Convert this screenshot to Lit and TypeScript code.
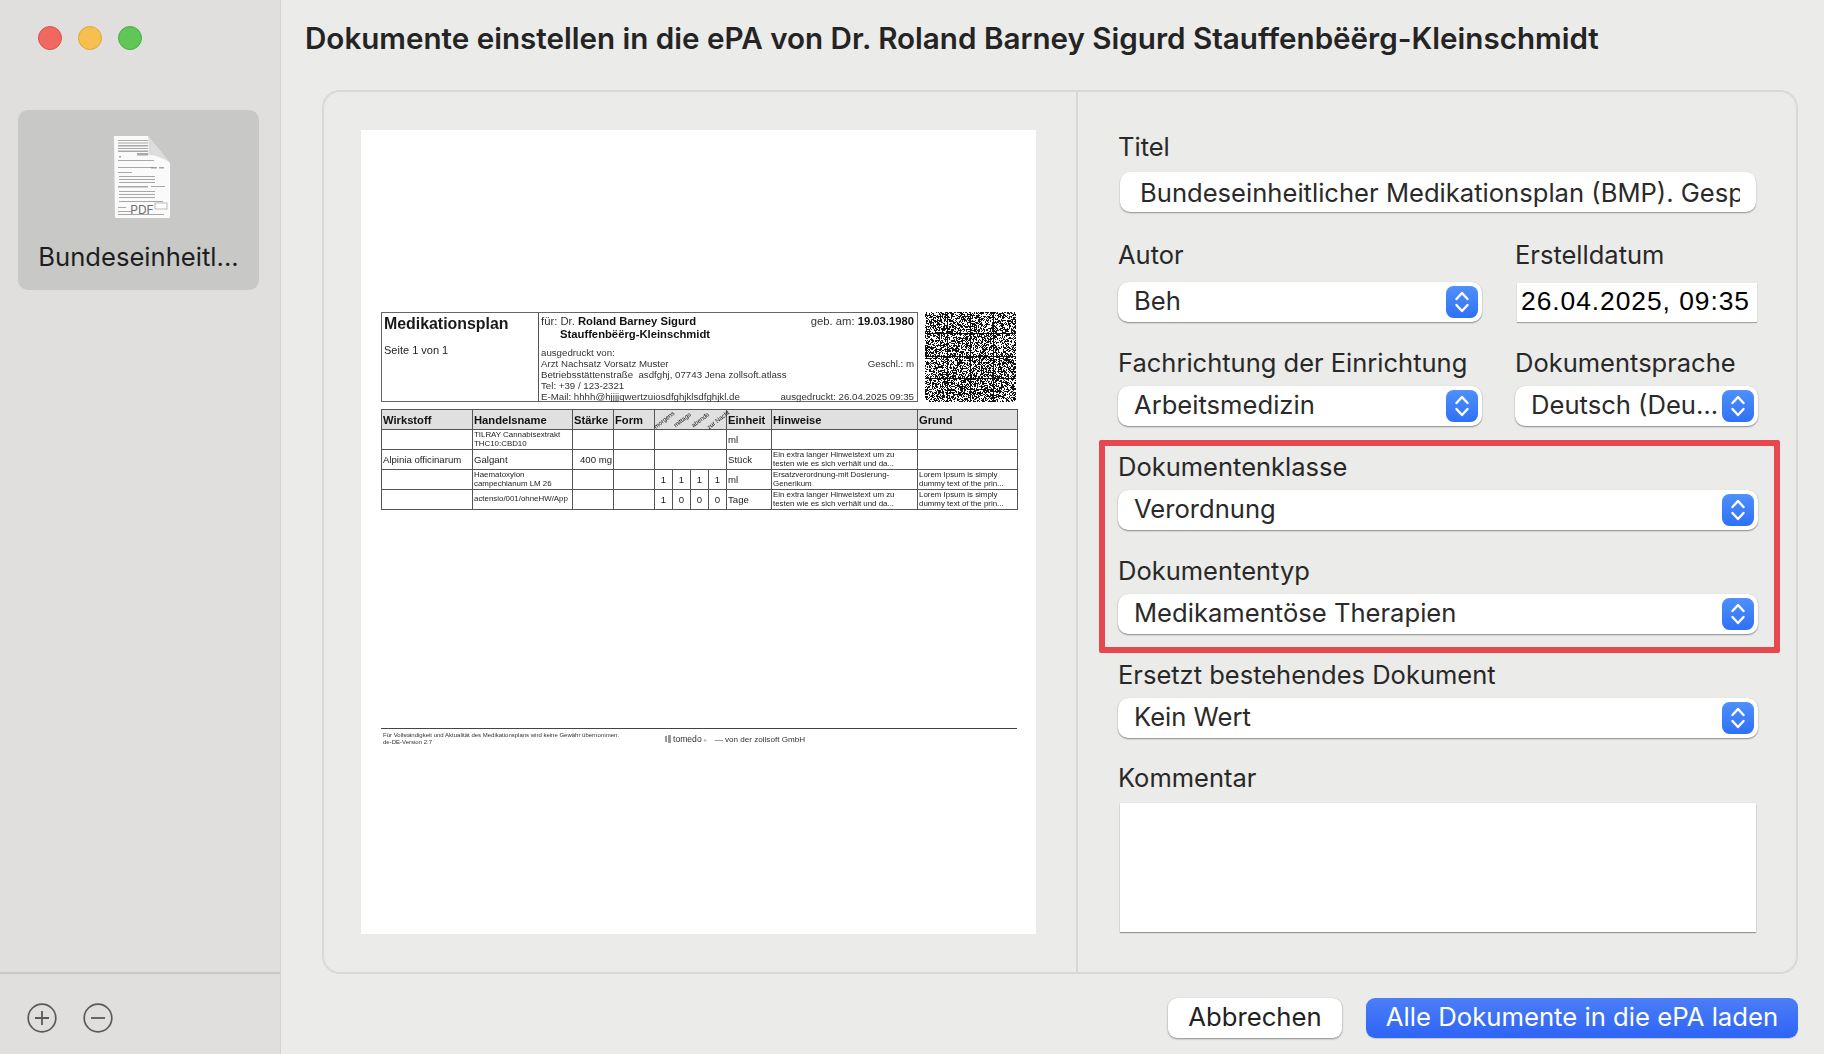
import { LitElement, html, svg, css } from "lit";
import { customElement } from "lit/decorators.js";

const HINT = "Ein extra langer Hinweistext um zu testen wie es sich verhält und da...";
const LOREM = "Lorem Ipsum is simply dummy text of the prin...";

interface Row {
  wirk: string; name: string; nameSmall: boolean; staerke: string;
  dose: string[]; einheit: string; hinweis: string; grund: string;
}
const ROWS: Row[] = [
  { wirk: "", name: "TILRAY Cannabisextrakt THC10:CBD10", nameSmall: true, staerke: "", dose: [], einheit: "ml", hinweis: "", grund: "" },
  { wirk: "Alpinia officinarum", name: "Galgant", nameSmall: false, staerke: "400 mg", dose: [], einheit: "Stück", hinweis: HINT, grund: "" },
  { wirk: "", name: "Haematoxylon campechianum LM 26", nameSmall: true, staerke: "", dose: ["1", "1", "1", "1"], einheit: "ml", hinweis: "Ersatzverordnung-mit Dosierung-Generikum", grund: LOREM },
  { wirk: "", name: "actensio/001/ohneHW/App", nameSmall: true, staerke: "", dose: ["1", "0", "0", "0"], einheit: "Tage", hinweis: HINT, grund: LOREM },
];
const COLS = [91, 100, 41, 41, 18, 18, 18, 18, 45, 146, 100];

function matrixPath(): string {
  let s = 12345;
  const rnd = () => { s = (s * 1103515245 + 12345) & 0x7fffffff; return (s >> 16) / 32767; };
  let d = "";
  for (let y = 0; y < 90; y++) {
    for (let x = 0; x < 91; x++) {
      const line = x === 22 || x === 45 || x === 68 || y === 21 || y === 44 || y === 66;
      if (line || rnd() < 0.52) d += `M${x} ${y}h1v1h-1z`;
    }
  }
  return d;
}
const MATRIX = matrixPath();

const ICON_LINES: [number, number, number, number][] = [
  [5, 4, 30, 1], [5, 6.5, 30, 1], [5, 9, 30, 1.5], [5, 12, 30, 1], [5, 14.5, 30, 1.5], [24, 17, 11, 2.5],
  [6, 20, 2, 1.5], [5, 24, 36, 1], [5, 31, 36, 1], [38, 31, 6, 1.5], [46, 31, 5, 1.5], [5, 36, 14, 1],
  [6, 40, 36, 1], [6, 43, 36, 1], [6, 46, 36, 1], [5, 50, 30, 1.5], [38, 50, 14, 1], [6, 55, 36, 1],
  [6, 58, 36, 1], [6, 61, 36, 1], [6, 65, 44, 1], [5, 71, 8, 1], [5, 75, 14, 1], [5, 78, 46, 1],
];

@customElement("app-root")
export class AppRoot extends LitElement {
  static styles = css`
    :host { display: block; width: 1824px; height: 1054px; overflow: hidden; font-family: Inter, "Noto Sans", sans-serif; color: #2a2a2a; }
    * { box-sizing: border-box; }
    .app { display: flex; width: 1824px; height: 1054px; background: #ebebe9; }

    .sidebar { width: 281px; flex: none; display: flex; flex-direction: column; background: #e0dfde; border-right: 1px solid #d2d2d0; }
    .lights { display: flex; gap: 16px; padding: 26px 0 0 38px; height: 110px; }
    .light { width: 24px; height: 24px; border-radius: 50%; border: 1px solid; }
    .red { background: #f0685f; border-color: #d9534b; }
    .yellow { background: #f6bf4f; border-color: #dea53a; }
    .green { background: #60c656; border-color: #4cae44; }
    .item { margin: 0 21px 0 18px; height: 180px; border-radius: 10px; background: #c8c8c7; display: flex; flex-direction: column; align-items: center; padding-top: 26px; }
    .doc { width: 58px; height: 83px; display: block; margin-left: 6px; }
    .item-label { margin-top: 22px; font-size: 25.6px; line-height: 32px; color: #1e1e1e; white-space: nowrap; }
    .spacer { flex: 1; }
    .side-foot { height: 82px; border-top: 2px solid #c8c8c6; display: flex; align-items: flex-start; gap: 26px; padding: 29px 0 0 27px; }
    .round { width: 30px; height: 30px; display: block; }

    .main { flex: 1; min-width: 0; display: flex; flex-direction: column; }
    h1 { margin: 0; height: 90px; padding: 19px 0 0 24px; font-size: 29.6px; line-height: 39px; font-weight: 600; color: #242424; white-space: nowrap; }
    .panel { margin: 0 26px 0 41px; height: 884px; display: flex; border: 2px solid #d8d8d6; border-radius: 18px; }
    .preview { width: 754px; flex: none; border-right: 2px solid #d8d8d6; padding: 38px 0 0 37px; }
    .page { width: 675px; height: 804px; background: #fff; padding: 182px 19px 0 20px; color: #222; font-family: "Liberation Sans", Arial, sans-serif; }
    .page-inner { filter: blur(0.35px); }
    .head { display: flex; gap: 7px; height: 90px; }
    .head-box { width: 537px; display: flex; border: 1px solid #666; }
    .head-left { width: 157px; flex: none; border-right: 1px solid #555; padding: 2px 0 0 2px; }
    .plan { font-size: 15.9px; line-height: 18px; font-weight: 700; color: #1a1a1a; }
    .seite { margin-top: 11px; font-size: 11px; line-height: 12px; }
    .head-right { flex: 1; padding: 2px 3px 0 2px; font-size: 9.7px; line-height: 11px; display: flex; flex-direction: column; color: #333; }
    .hrow { display: flex; justify-content: space-between; white-space: nowrap; }
    .hrow b { color: #111; }
    .big { font-size: 11.25px; line-height: 12.5px; }
    .indent { padding-left: 19px; font-weight: 700; color: #111; }
    .gapped { margin-top: 7px; }
    .matrix { width: 91px; height: 90px; display: block; }

    table { margin-top: 7px; width: 636px; table-layout: fixed; border-collapse: collapse; font-size: 9.6px; color: #222; }
    th, td { border: 1px solid #555; padding: 0 1px 0 1px; height: 20px; overflow: hidden; vertical-align: middle; text-align: left; font-weight: 400; }
    th { background: #e0e0e0; font-size: 11.2px; font-weight: 700; color: #111; white-space: nowrap; }
    th.rot { padding: 0; overflow: visible; border-left: 0; border-right: 0; }
    .rot span { display: block; width: 40px; margin-left: -11px; text-align: center; font-size: 6.2px; font-weight: 400; line-height: 7px; transform: rotate(-38deg); white-space: nowrap; }
    td.small { font-size: 7.9px; line-height: 8.6px; }
    td.num { text-align: center; padding: 0; }
    td.right { text-align: right; }

    .foot { margin-top: 218px; border-top: 1.5px solid #444; display: flex; padding: 3px 0 0 2px; font-size: 6px; line-height: 7px; color: #333; width: 636px; }
    .foot-l { width: 282px; flex: none; }
    .foot-r { display: flex; align-items: center; gap: 8px; font-size: 8.1px; height: 14px; }
    .tomedo { display: flex; align-items: center; gap: 2px; font-size: 8.6px; }
    .logo { width: 6px; height: 8px; display: block; }
    .reg { font-size: 4px; align-self: flex-start; margin-top: 2px; }

    .form { flex: 1; min-width: 0; padding: 43px 38px 0 40px; display: flex; flex-direction: column; }
    .field { display: flex; flex-direction: column; min-width: 0; }
    .label { font-size: 25.5px; line-height: 24px; height: 24px; margin-bottom: 11px; color: #282828; white-space: nowrap; }
    .wide-gap { margin-bottom: 13px; }
    .widest-gap { margin-bottom: 15px; }
    .row { display: grid; grid-template-columns: 364px 243px; gap: 33px; }
    .mt31 { margin-top: 31px; }
    .mt29 { margin-top: 29px; }
    .mt28 { margin-top: 28px; }

    .text { height: 40px; margin: 0 2px; background: #fff; border-radius: 10px; box-shadow: 0 1px 1.5px rgba(0,0,0,.4); padding: 0 16px 0 20px; font-size: 25.6px; line-height: 41px; overflow: hidden; }
    .clip { overflow: hidden; white-space: nowrap; }
    .select { height: 40px; background: #fff; border-radius: 10px; box-shadow: 0 1px 1.5px rgba(0,0,0,.4), 0 0 1px rgba(0,0,0,.18); display: flex; align-items: center; padding: 0 4px 0 16px; font-size: 25.6px; }
    .select .val { flex: 1; min-width: 0; white-space: nowrap; overflow: hidden; text-overflow: ellipsis; padding-bottom: 3px; }
    .stepper { width: 32px; height: 32px; flex: none; display: block; }
    .date { height: 39px; margin: 1px 1px 0 2px; background: #fff; box-shadow: 0 1px 1px rgba(0,0,0,.3); padding-left: 4px; font-family: "Liberation Sans", Arial, sans-serif; font-size: 26.4px; line-height: 36px; color: #000; white-space: nowrap; letter-spacing: 0.95px; overflow: hidden; }
    .area { height: 129px; margin: 0 2px; background: #fff; box-shadow: 0 1px 1px rgba(0,0,0,.35), 0 0 1px rgba(0,0,0,.15); }

    .marked { position: relative; margin-top: 29px; }
    .marker { position: absolute; left: -19px; right: -22px; top: -15px; bottom: -19px; border: 6px solid #e5484f; border-radius: 2px; pointer-events: none; }

    .actions { flex: 1; display: flex; justify-content: flex-end; align-items: flex-start; gap: 24px; padding: 24px 26px 0 0; }
    button { height: 40px; border: 0; border-radius: 9px; font: inherit; font-size: 25.7px; padding: 0 0 3px; white-space: nowrap; }
    .cancel { width: 174px; background: #fff; color: #222; box-shadow: 0 1px 2px rgba(0,0,0,.4), 0 0 1px rgba(0,0,0,.2); }
    .primary { width: 432px; color: #fff; background: linear-gradient(#4c7ef6, #2d64f6); box-shadow: 0 1px 1px rgba(0,0,0,.15); }
  `;

  private stepper() {
    return html`<svg class="stepper" viewBox="0 0 32 32" aria-hidden="true">
      <defs><linearGradient id="sg" x1="0" y1="0" x2="0" y2="1"><stop offset="0" stop-color="#4f90fa"/><stop offset="1" stop-color="#2f71f5"/></linearGradient></defs>
      <rect width="32" height="32" rx="7.5" fill="url(#sg)"/>
      <path d="M10.5 13 16 7 21.5 13M10.5 19 16 25 21.5 19" fill="none" stroke="#fff" stroke-width="2.4" stroke-linecap="round" stroke-linejoin="round"/>
    </svg>`;
  }

  private select(value: string) {
    return html`<div class="select"><span class="val">${value}</span>${this.stepper()}</div>`;
  }

  private docIcon() {
    return html`<svg class="doc" viewBox="0 0 58 83" aria-hidden="true">
      <path d="M1 0H35L57 27V82H2Z" fill="#fafafa"/>
      <path d="M35 0C36 8 36 14 35 19C43 19 51 22 57 27Z" fill="#dcdcdc"/>
      ${ICON_LINES.map(([x, y, w, h]) => svg`<rect x=${x} y=${y} width=${w} height=${h} fill="#8c8c8c" opacity="0.75"/>`)}
      <rect x="42" y="67" width="12" height="6" fill="#fff" stroke="#aaa" stroke-width="0.8"/>
      <text x="29" y="78" text-anchor="middle" font-family="Inter, sans-serif" font-size="12" fill="#6e6e6e">PDF</text>
    </svg>`;
  }

  private round(minusOnly: boolean) {
    return html`<svg class="round" viewBox="0 0 30 30" aria-hidden="true">
      <circle cx="15" cy="15" r="13.8" fill="none" stroke="#5a5a5a" stroke-width="1.7"/>
      <path d=${minusOnly ? "M8 15H22" : "M8 15H22M15 8V22"} fill="none" stroke="#5a5a5a" stroke-width="1.8"/>
    </svg>`;
  }

  private page() {
    return html`<div class="page"><div class="page-inner">
      <div class="head">
        <div class="head-box">
          <div class="head-left">
            <div class="plan">Medikationsplan</div>
            <div class="seite">Seite 1 von 1</div>
          </div>
          <div class="head-right">
            <div class="hrow big"><span>für: Dr. <b>Roland Barney Sigurd</b></span><span>geb. am: <b>19.03.1980</b></span></div>
            <div class="hrow big indent">Stauffenbëërg-Kleinschmidt</div>
            <div class="hrow gapped">ausgedruckt von:</div>
            <div class="hrow"><span>Arzt Nachsatz Vorsatz Muster</span><span>Geschl.: m</span></div>
            <div class="hrow">Betriebsstättenstraße&nbsp; asdfghj, 07743 Jena zollsoft.atlass</div>
            <div class="hrow">Tel: +39 / 123-2321</div>
            <div class="hrow"><span>E-Mail: hhhh@hjjjjqwertzuiosdfghjklsdfghjkl.de</span><span>ausgedruckt: 26.04.2025 09:35</span></div>
          </div>
        </div>
        <svg class="matrix" viewBox="0 0 91 90" shape-rendering="crispEdges" aria-hidden="true"><path d=${MATRIX} fill="#111"/></svg>
      </div>
      <table>
        <colgroup>${COLS.map((w) => html`<col style="width:${w}px"/>`)}</colgroup>
        <thead><tr>
          <th>Wirkstoff</th><th>Handelsname</th><th>Stärke</th><th>Form</th>
          <th class="rot"><span>morgens</span></th><th class="rot"><span>mittags</span></th>
          <th class="rot"><span>abends</span></th><th class="rot"><span>zur Nacht</span></th>
          <th>Einheit</th><th>Hinweise</th><th>Grund</th>
        </tr></thead>
        <tbody>${ROWS.map((r) => html`<tr>
          <td>${r.wirk}</td>
          <td class=${r.nameSmall ? "small" : ""}>${r.name}</td>
          <td class="right">${r.staerke}</td>
          <td></td>
          ${r.dose.length
            ? r.dose.map((d) => html`<td class="num">${d}</td>`)
            : html`<td colspan="4"></td>`}
          <td>${r.einheit}</td>
          <td class="small">${r.hinweis}</td>
          <td class="small">${r.grund}</td>
        </tr>`)}</tbody>
      </table>
      <div class="foot">
        <div class="foot-l">Für Vollständigkeit und Aktualität des Medikationsplans wird keine Gewähr übernommen.<br/>de-DE-Version 2.7</div>
        <div class="foot-r">
          <span class="tomedo"><svg class="logo" viewBox="0 0 6 8" aria-hidden="true"><path d="M0 1H2V7H0ZM3 0H6V8H3Z" fill="#999"/></svg>tomedo<span class="reg">®</span></span>
          <span>— von der zollsoft GmbH</span>
        </div>
      </div>
    </div></div>`;
  }

  render() {
    return html`<div class="app">
      <aside class="sidebar">
        <div class="lights"><span class="light red"></span><span class="light yellow"></span><span class="light green"></span></div>
        <div class="item">${this.docIcon()}<div class="item-label">Bundeseinheitl...</div></div>
        <div class="spacer"></div>
        <div class="side-foot">${this.round(false)}${this.round(true)}</div>
      </aside>
      <main class="main">
        <h1>Dokumente einstellen in die ePA von Dr. Roland Barney Sigurd Stauffenbëërg-Kleinschmidt</h1>
        <section class="panel">
          <div class="preview">${this.page()}</div>
          <div class="form">
            <div class="field">
              <div class="label wide-gap">Titel</div>
              <div class="text"><div class="clip">Bundeseinheitlicher Medikationsplan (BMP). Gespeichert am 26.04.2025</div></div>
            </div>
            <div class="row mt31">
              <div class="field"><div class="label widest-gap">Autor</div>${this.select("Beh")}</div>
              <div class="field"><div class="label widest-gap">Erstelldatum</div><div class="date">26.04.2025, 09:35</div></div>
            </div>
            <div class="row mt29">
              <div class="field"><div class="label">Fachrichtung der Einrichtung</div>${this.select("Arbeitsmedizin")}</div>
              <div class="field"><div class="label">Dokumentsprache</div>${this.select("Deutsch (Deutschland)")}</div>
            </div>
            <div class="marked">
              <span class="marker"></span>
              <div class="field"><div class="label">Dokumentenklasse</div>${this.select("Verordnung")}</div>
              <div class="field mt29"><div class="label">Dokumententyp</div>${this.select("Medikamentöse Therapien")}</div>
            </div>
            <div class="field mt29"><div class="label">Ersetzt bestehendes Dokument</div>${this.select("Kein Wert")}</div>
            <div class="field mt28"><div class="label wide-gap">Kommentar</div><div class="area"></div></div>
          </div>
        </section>
        <div class="actions">
          <button class="cancel">Abbrechen</button>
          <button class="primary">Alle Dokumente in die ePA laden</button>
        </div>
      </main>
    </div>`;
  }
}
